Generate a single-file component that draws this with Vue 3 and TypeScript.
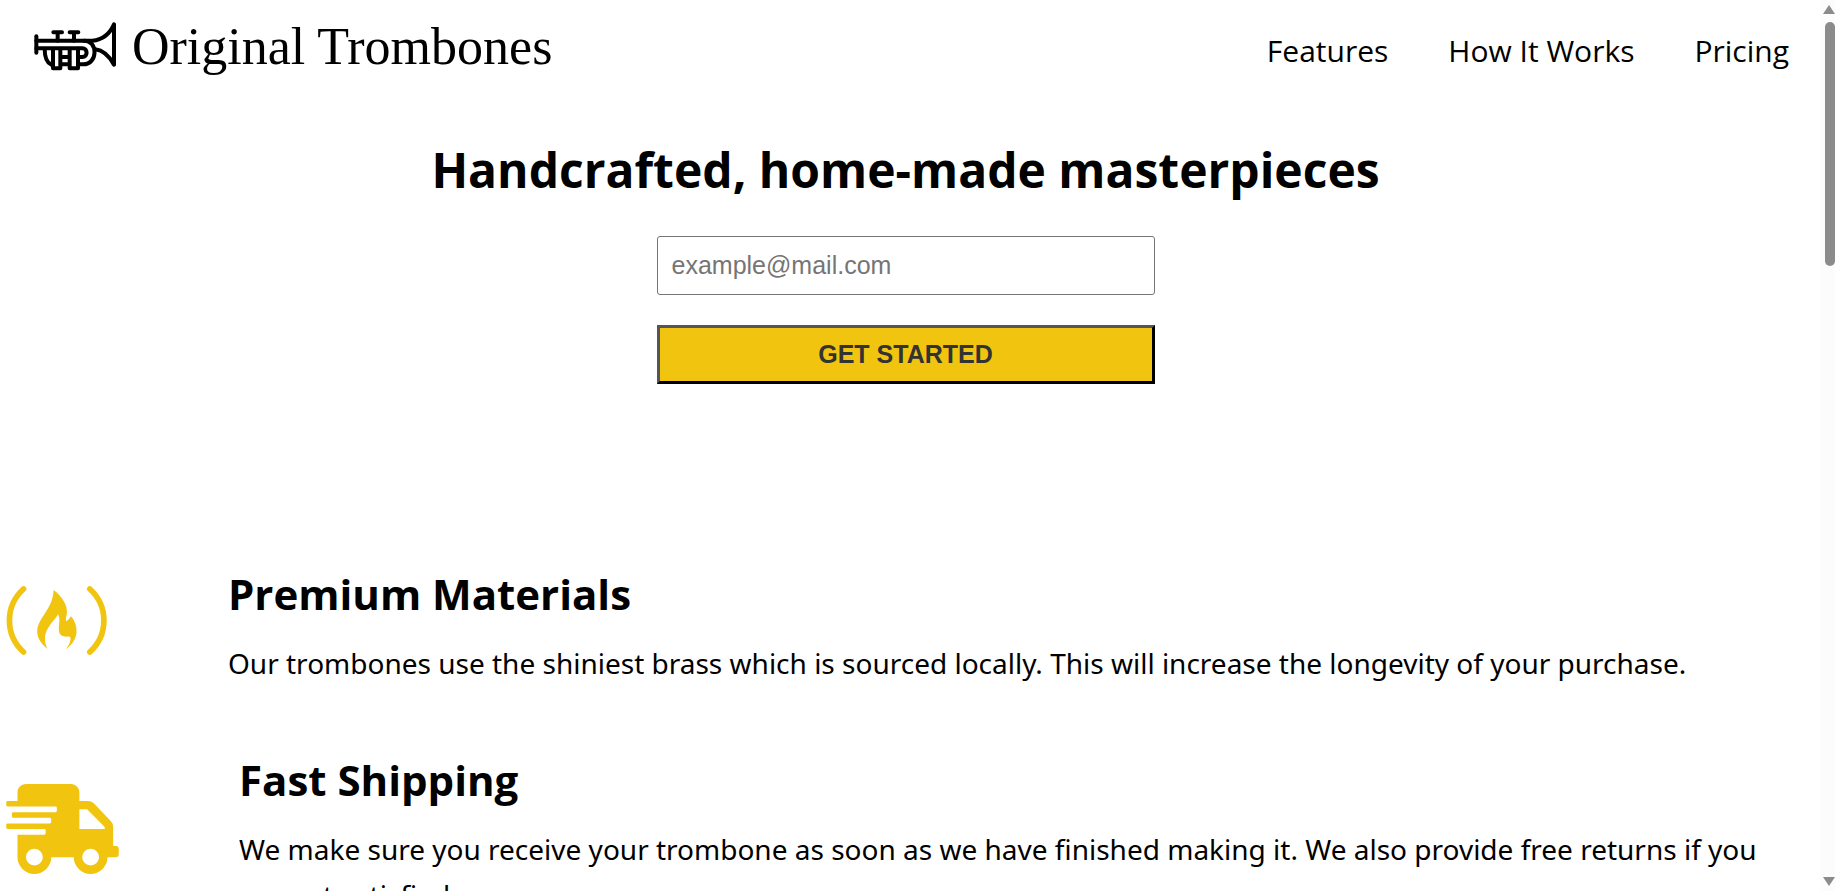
<script setup lang="ts">
import { ref } from 'vue'

interface NavItem {
  label: string
  target: string
}

const navItems: NavItem[] = [
  { label: 'Features', target: '#features' },
  { label: 'How It Works', target: '#how-it-works' },
  { label: 'Pricing', target: '#pricing' },
]

const email = ref('')
</script>

<template>
  <div class="page">
    <header class="header">
      <a class="brand" href="#" aria-label="Original Trombones home">
        <svg class="brand-icon" viewBox="0 0 246 150" aria-hidden="true">
          <g fill="none" stroke="#000" stroke-width="12" stroke-linecap="round" stroke-linejoin="round">
            <path d="M7 43V92" />
            <path d="M7 56H175C208 53 228 34 240 7V128C222 96 202 84 184 82" />
            <path d="M7 79H145C162 79 162 105 145 105H136" />
            <path d="M150 56C193 56 192 127 148 127H134" />
            <path d="M32 80C32 104 38 122 52 128" />
            <path d="M58 31H84M71 31V56M107 31H133M120 31V56" />
            <path d="M57 80V139H79V80M107 80V139H132V80M79 105H107M79 127H107" />
          </g>
        </svg>
        <span class="brand-name">Original Trombones</span>
      </a>
      <nav class="nav" aria-label="Main">
        <a v-for="item in navItems" :key="item.target" class="nav-link" :href="item.target">{{ item.label }}</a>
      </nav>
    </header>

    <main>
      <section class="hero">
        <h1 class="hero-title">Handcrafted, home-made masterpieces</h1>
        <form class="signup" @submit.prevent>
          <input v-model="email" class="field" type="email" placeholder="example@mail.com" aria-label="Email address" />
          <button class="submit" type="submit">GET STARTED</button>
        </form>
      </section>

      <section id="features" class="features">
        <article class="feature">
          <svg class="feature-icon fire" viewBox="0 0 304 206" aria-hidden="true">
            <g fill="none" stroke="#f1c40f" stroke-width="17" stroke-linecap="round">
              <path d="M52 9C-4 60 -4 146 52 197" />
              <path d="M250 9C306 60 306 146 250 197" />
            </g>
            <path fill="#f1c40f" d="M142 12C165 29 187 60 181 86C175 111 180 109 194 90C207 105 212 124 210 142C207 161 195 178 178 189C188 177 194 163 192 153C188 149 184 152 175 151C155 149 157 130 158 115C160 100 159 92 155 84C149 99 115 125 116 157C116 169 119 180 124 187C108 176 93 157 93 137C93 94 139 73 142 12Z" />
          </svg>
          <div class="feature-body">
            <h2 class="feature-title">Premium Materials</h2>
            <p class="feature-text">Our trombones use the shiniest brass which is sourced locally. This will increase the longevity of your purchase.</p>
          </div>
        </article>

        <article class="feature">
          <svg class="feature-icon truck" viewBox="0 0 640 512" aria-hidden="true">
            <path fill="#f1c40f" d="M112 0C85 0 64 21 64 48V96H8Q0 96 0 104V120Q0 128 8 128H280Q288 128 288 136V152Q288 160 280 160H40Q32 160 32 168V184Q32 192 40 192H248Q256 192 256 200V216Q256 224 248 224H8Q0 224 0 232V248Q0 256 8 256H216Q224 256 224 264V280Q224 288 216 288H64V416A96 96 0 0 0 256 416H384A96 96 0 0 0 576 416H624Q640 416 640 400V368Q640 352 624 352H608V244Q608 224 594 210L498 110Q484 96 464 96H416V48C416 21 395 0 368 0ZM560 244V256H416V144H460ZM160 368A48 48 0 1 1 160 464A48 48 0 1 1 160 368ZM480 368A48 48 0 1 1 480 464A48 48 0 1 1 480 368Z" />
          </svg>
          <div class="feature-body">
            <h2 class="feature-title">Fast Shipping</h2>
            <p class="feature-text">We make sure you receive your trombone as soon as we have finished making it. We also provide free returns if you are not satisfied.</p>
          </div>
        </article>
      </section>
    </main>

    <div class="scroll-rail" aria-hidden="true">
      <svg class="scroll-arrow" viewBox="0 0 12 10"><path d="M6 0L12 9H0Z" fill="#8b8b8b" /></svg>
      <div class="scroll-track"><div class="scroll-thumb"></div></div>
      <svg class="scroll-arrow" viewBox="0 0 12 10"><path d="M6 10L0 1H12Z" fill="#8b8b8b" /></svg>
    </div>
  </div>
</template>

<style>
body {
  background: #fff;
}
</style>

<style scoped>
.page {
  height: 100vh;
  overflow: hidden;
  box-sizing: border-box;
  padding-right: 24px;
  color: #000;
  font-family: "Segoe UI", "Open Sans", "Noto Sans", sans-serif;
}

.header {
  display: flex;
  align-items: center;
  justify-content: space-between;
  height: 102px;
  padding: 0 22px 0 34px;
}

.brand {
  display: flex;
  align-items: center;
  gap: 16px;
  margin-bottom: 8px;
  color: #000;
  text-decoration: none;
}

.brand-icon {
  width: 82px;
  height: 50px;
}

.brand-name {
  font-family: "Liberation Serif", serif;
  font-size: 52px;
  line-height: 60px;
  white-space: nowrap;
}

.nav {
  display: flex;
  gap: 60px;
}

.nav-link {
  color: #000;
  font-size: 30px;
  line-height: 40px;
  text-decoration: none;
}

.hero {
  display: flex;
  flex-direction: column;
  align-items: center;
  padding-top: 34px;
}

.hero-title {
  margin: 0;
  font-size: 48px;
  line-height: 68px;
  font-weight: 700;
}

.signup {
  display: flex;
  flex-direction: column;
  gap: 30px;
  width: 498px;
  margin-top: 32px;
}

.field,
.submit {
  box-sizing: border-box;
  width: 100%;
  height: 59px;
  font-family: Arial, "Liberation Sans", sans-serif;
  font-size: 25px;
}

.field {
  padding: 0 14px;
  border: 1px solid #767676;
  border-radius: 3px;
  background: #fff;
}

.field::placeholder {
  color: #757575;
}

.submit {
  padding: 0;
  border: 3px solid;
  border-color: #555 #000 #000 #555;
  background: #f1c40f;
  color: #333;
  font-weight: 700;
}

.features {
  padding: 182px 20px 0 6px;
}

.feature {
  display: flex;
  align-items: center;
  gap: 120px;
  margin-bottom: 66px;
}

.feature-icon {
  flex: none;
  margin-bottom: 12px;
}

.fire {
  width: 102px;
  height: 69px;
}

.truck {
  width: 113px;
  height: 90px;
}

.feature-title {
  margin: 0;
  font-size: 42px;
  line-height: 56px;
}

.feature-text {
  margin: 18px 0 0;
  font-family: "Segoe UI", "Noto Sans", sans-serif;
  font-size: 28px;
  line-height: 46px;
}

.scroll-rail {
  position: fixed;
  top: 0;
  right: 0;
  bottom: 0;
  display: flex;
  flex-direction: column;
  box-sizing: border-box;
  width: 15px;
  padding: 5px 0;
  background: #fcfcfc;
}

.scroll-arrow {
  width: 12px;
  height: 10px;
  align-self: flex-end;
}

.scroll-track {
  flex: 1;
  padding-top: 7px;
}

.scroll-thumb {
  width: 10px;
  height: 244px;
  margin-left: auto;
  border-radius: 5px;
  background: #8b8b8b;
}
</style>
